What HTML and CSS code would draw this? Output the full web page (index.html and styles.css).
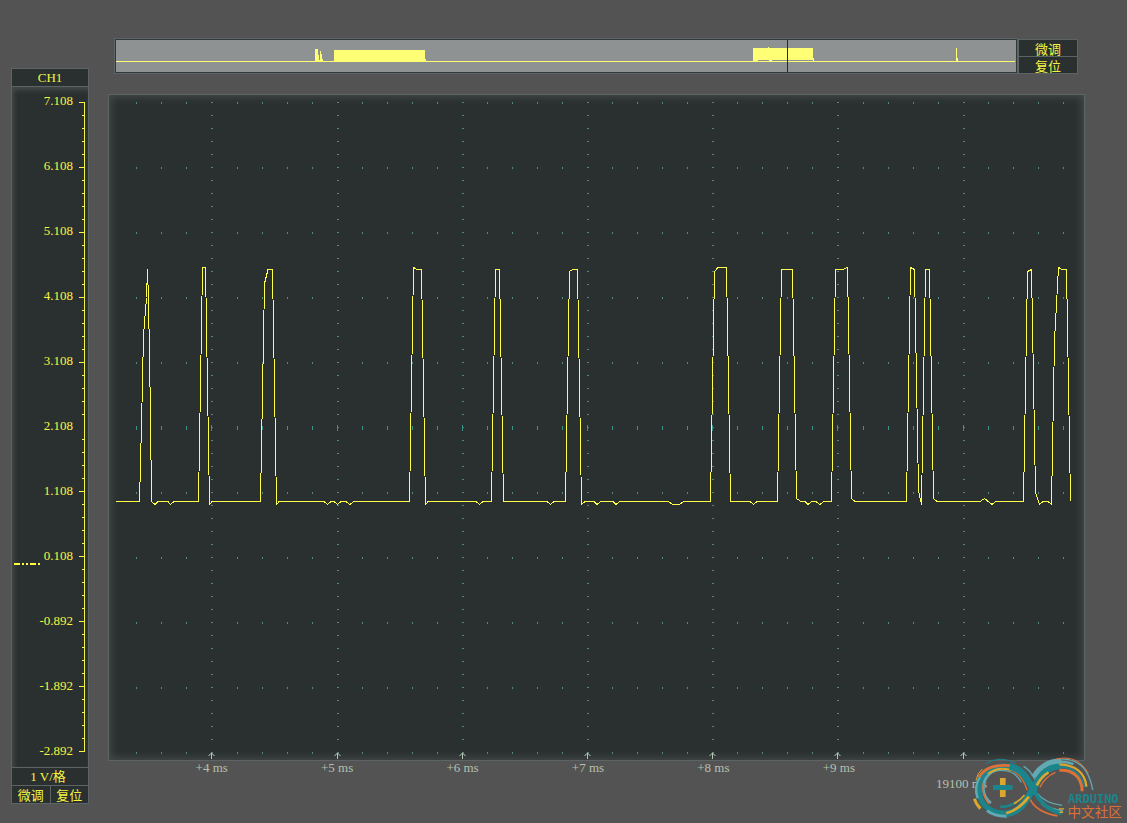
FILE: index.html
```html
<!DOCTYPE html>
<html lang="zh-CN">
<head>
<meta charset="utf-8">
<meta name="viewport" content="width=device-width, initial-scale=1">
<title>CH1</title>
<link rel="stylesheet" href="styles.css">
</head>
<body>
<main class="app">
  <aside class="channel">
    <h1 class="channel-name">CH1</h1>
    <div class="scale">
      <ol class="scale-labels">
        <li>7.108</li><li>6.108</li><li>5.108</li><li>4.108</li><li>3.108</li><li>2.108</li><li>1.108</li><li>0.108</li><li>-0.892</li><li>-1.892</li><li>-2.892</li>
      </ol>
      <svg class="scale-ticks" viewBox="0 0 6 651" preserveAspectRatio="none" aria-hidden="true">
        <path d="M5.500 0V651" stroke-width="1"/>
        <path d="M4 0V651" stroke-width="3" stroke-dasharray="1 12"/>
        <path d="M3 0V651" stroke-width="6" stroke-dasharray="1 64"/>
      </svg>
      <svg class="zero-mark" viewBox="0 0 27 2" aria-hidden="true"><path d="M0 1H6M8 1H10M12 1H14M16 1H22M24 1H26" stroke-width="2"/></svg>
    </div>
    <div class="per-div">1 V/格</div>
    <div class="channel-actions">
      <button type="button">微调</button>
      <button type="button">复位</button>
    </div>
  </aside>

  <section class="display">
    <div class="overview-row">
      <svg class="overview" viewBox="116 40 900 32" preserveAspectRatio="none" shape-rendering="crispEdges" role="img" aria-label="Overview">
        <path class="wave-fill" d="M116 61H1015V62H116ZM315 61V49H318V52L319 58L320 61L320 51H321L322 56L323 61ZM334 61V50H425V56L426 61ZM753 61V48H768V47H769V48H813V55L814 61H813V60H772V62H769V60H758L757 62H753ZM956 61V48H957V55L958 61Z"/>
        <path class="cursor" d="M787 40H788V72H787Z"/>
      </svg>
      <div class="overview-actions">
        <button type="button">微调</button>
        <button type="button">复位</button>
      </div>
    </div>

    <div class="scope">
      <svg class="plot" viewBox="109 95 975 665" shape-rendering="crispEdges" role="img" aria-label="CH1">
        <defs>
          <path id="row" d="M136.500 0v2M161.500 0v2M186.500 0v2M237.500 0v2M262.500 0v2M287.500 0v2M312.500 0v2M362.500 0v2M387.500 0v2M412.500 0v2M437.500 0v2M487.500 0v2M512.500 0v2M537.500 0v2M562.500 0v2M612.500 0v2M637.500 0v2M662.500 0v2M687.500 0v2M737.500 0v2M762.500 0v2M787.500 0v2M812.500 0v2M863.500 0v2M888.500 0v2M913.500 0v2M938.500 0v2M988.500 0v2M1013.500 0v2M1038.500 0v2M1063.500 0v2"/>
        </defs>
        <g class="grid">
          <use href="#row" y="102"/><use href="#row" y="167"/><use href="#row" y="232"/><use href="#row" y="297"/><use href="#row" y="362"/>
          <use href="#row" y="492"/><use href="#row" y="557"/><use href="#row" y="622"/><use href="#row" y="687"/><use href="#row" y="752"/>
          <path class="columns" d="M212 102V753M338 102V753M463 102V753M588 102V753M713 102V753M838 102V753M964 102V753"/>
          <g class="middle">
            <use href="#row" y="426"/><use href="#row" y="428"/>
            <path d="M211.500 425v6M337.500 425v6M462.500 425v6M587.500 425v6M712.500 425v6M837.500 425v6M963.500 425v6"/>
          </g>
        </g>
        <path class="arrows" shape-rendering="auto" d="M211.500 759v-6m-3 3l3-3l3 3M337.500 759v-6m-3 3l3-3l3 3M462.500 759v-6m-3 3l3-3l3 3M587.500 759v-6m-3 3l3-3l3 3M712.500 759v-6m-3 3l3-3l3 3M837.500 759v-6m-3 3l3-3l3 3M963.500 759v-6m-3 3l3-3l3 3"/>
        <polyline class="trace" transform="translate(0 .5)" points="116,501 139.500,501 141,443 142,403 143.500,335 146.500,297 147.500,269 148.500,299 149.500,357 150.500,415 151.500,501 155,504 158,501 168,501 170.500,504 174,501 198.500,501 202.500,267 205.500,267 209.500,504 212,501 260.500,501 264.500,283 268,269 272.500,269 276.500,504 279,501 324,501 327.500,504 331,501 334,501 337.500,504 341,501 346,501 350,504 354,501 409.500,501 413.500,267 417,269 421.500,269 425.500,504 428,501 476,501 479.500,504 483,501 491.500,501 495.500,269 499.500,269 503.500,501 547,501 550.500,504 554,501 565.500,501 569.500,271 573,269 577.500,269 581.500,504 585,501 594,501 597,504 601,501 613,501 616,504 620,501 668,501 673,504 679,504 684,501 710.500,501 714.500,271 718,267 726.500,267 730.500,501 750,501 753.500,504 757,501 777.500,501 781.500,269 792.500,269 796.500,498 801,501 805,501 808,504 812,501 816,501 820,504 824,501 831.500,501 835.500,269 843,269 847.500,267 851.500,498 855,501 906.500,501 910.500,267 914.500,269 918.500,490 921.500,504 925.500,269 929.500,269 933.500,498 937,501 980,501 984.500,498 992,504 996,501 1023.500,501 1027.500,271 1031.500,269 1035.500,492 1039.500,504 1043,501 1048,501 1051.500,504 1054.500,340 1058.500,267 1062,269 1066.500,269 1070.500,501"/>
      </svg>
    </div>

    <div class="axis">
      <ol class="time-labels">
        <li>+4 ms</li><li>+5 ms</li><li>+6 ms</li><li>+7 ms</li><li>+8 ms</li><li>+9 ms</li>
      </ol>
      <p class="time-base">19100 ms</p>
    </div>
  </section>

  <svg class="logo" viewBox="155 45 466 195" role="img" aria-label="ARDUINO 中文社区">
    <g fill="none">
      <path class="teal" stroke-width="16" d="M272 80C222 72 180 101 177 146C174 195 214 222 260 220"/>
      <path class="sky" stroke-width="7" d="M172 175A76 76 0 0 1 180 108"/>
      <path class="sky" stroke-width="9" d="M200 212Q224 230 260 229"/>
      <path class="sky" stroke-width="8" d="M212 189A57 57 0 0 1 204 105Q216 93 232 90"/>
      <path class="sky" stroke-width="4" d="M232 92Q282 86 303 127"/>
      <path class="orange" stroke-width="9" d="M176 111Q201 70 271 77"/>
      <path class="orange" stroke-width="4" d="M189 127Q183 168 207 192M278 93Q306 105 321 151"/>
      <path class="yellow" stroke-width="6" d="M203 101Q235 77 278 91"/>
      <path class="yellow" stroke-width="3" d="M167 121Q171 98 186 87"/>
      <path class="yellow" stroke-width="9" d="M162 176Q168 193 180 206"/>
      <path class="teal" stroke-width="3" d="M196 71Q237 45 287 69"/>
      <path class="sky" stroke-width="4" d="M310 79Q332 91 344 119"/>
      <path class="sky" stroke-width="4" d="M351 160Q375 190 426 196"/>
      <path class="sky" stroke-width="9" d="M366 190Q389 211 428 214"/>
      <path class="orange" stroke-width="5" d="M330 178Q348 216 412 228"/>
      <path class="teal" stroke-width="20" d="M268 79C308 85 326 126 344 157"/>
      <path class="teal" stroke-width="12" d="M340 150C358 187 389 213 424 220"/>
      <path class="teal" stroke-width="20" d="M258 221C309 218 326 163 357 116C376 88 395 78 424 77"/>
      <path class="yellow" stroke-width="8" d="M258 220Q296 210 326 170"/>
      <path class="teal" stroke-width="8" d="M240 200Q267 202 288 186"/>
      <path class="yellow" stroke-width="5" d="M281 191Q300 181 313 165"/>
      <path class="sky" stroke-width="15" d="M340 111C359 79 385 62 424 63"/>
      <path class="sky" stroke-width="4" d="M424 57Q501 55 518 150"/>
      <path class="sky" stroke-width="7" d="M420 65Q440 65 460 72"/>
      <path class="orange" stroke-width="3" d="M408 57Q472 42 505 100"/>
      <path class="teal" stroke-width="7" d="M417 79C458 80 486 106 492 143"/>
      <path class="orange" stroke-width="9" d="M418 91C455 88 486 110 486 154"/>
      <path class="yellow" stroke-width="7" d="M418 73C466 75 495 99 499 140"/>
      <path class="yellow" stroke-width="8" d="M350 136Q362 111 385 97"/>
      <path class="orange" stroke-width="4" d="M359 142Q375 110 406 97"/>
      <path class="yellow" stroke-width="4" d="M416 207H432M418 217H429"/>
    </g>
    <path fill="#dca72e" d="M239 114H256V171H239Z"/>
    <path fill="#1c858c" d="M218 135H277V150H218Z"/>
    <text class="logo-name" x="444" y="190">ARDUINO</text>
    <text class="logo-sub" x="442" y="231">中文社区</text>
  </svg>
</main>
</body>
</html>
```
FILE: styles.css
```css
* {
  box-sizing: border-box;
}

body {
  margin: 0;
  background: #535353;
  color: #f5f542;
  font: 13px/16px "Liberation Serif", "Noto Sans CJK SC", serif;
}

.app {
  position: relative;
  display: flex;
  gap: 19px;
  min-height: 100vh;
  padding: 39px 42px 19px 11px;
}

h1,
p,
ol {
  margin: 0;
  padding: 0;
  list-style: none;
}

button {
  flex: 1;
  padding: 0;
  border: 0;
  background: #2a2f2f;
  color: inherit;
  font: 13px/15px "Noto Sans CJK SC", sans-serif;
  cursor: pointer;
}

.channel {
  display: flex;
  flex: 0 0 78px;
  flex-direction: column;
  gap: 1px;
  margin-top: 29px;
  padding: 1px;
  background: #5d6465;
}

.channel-name,
.per-div {
  background: #2a2f2f;
  font-size: 13px;
  font-weight: 400;
  line-height: 17px;
  text-align: center;
}

.per-div {
  padding-right: 4px;
}

.scale {
  position: relative;
  display: flex;
  flex: 1;
  justify-content: flex-end;
  padding: 6px 3px 8px 0;
  background: #2a2f2f;
  box-shadow: inset 2px 3px 5px #454a4b;
}

.scale-labels {
  display: flex;
  flex-direction: column;
  justify-content: space-between;
  margin-right: 12px;
  text-align: right;
}

.scale-ticks {
  position: absolute;
  top: 15px;
  right: 3px;
  width: 6px;
  height: calc(100% - 30px);
  fill: none;
  stroke: #f5f542;
  shape-rendering: crispEdges;
}

.zero-mark {
  position: absolute;
  top: 70%;
  left: 2px;
  width: 27px;
  height: 2px;
  stroke: #ffff42;
}

.channel-actions {
  display: flex;
  gap: 1px;
  height: 17px;
}

.display {
  display: flex;
  flex: 1;
  flex-direction: column;
  min-width: 0;
}

.overview-row {
  display: flex;
  gap: 1px;
  height: 35px;
  margin: 0 7px 20px;
}

.overview {
  flex: 1;
  min-width: 0;
  height: 34px;
  border: 1px solid #33383a;
  background: #8f9292;
  box-shadow: 0 0 0 1px #5d6465;
}

.wave-fill {
  fill: #ffff76;
}

.cursor {
  fill: #26292b;
}

.overview-actions {
  display: flex;
  flex: 0 0 60px;
  flex-direction: column;
  gap: 1px;
  padding: 1px;
  background: #5d6465;
}

.scope {
  border: 1px solid #5d6465;
  background: #2a2f2f;
  box-shadow: inset 0 0 9px 2px #454a4b;
}

.plot {
  display: block;
  width: 100%;
  fill: none;
}

.grid {
  stroke: #52887f;
}

.columns {
  stroke-width: 2;
  stroke-dasharray: 1 12;
}

.middle {
  stroke: #389585;
}

.arrows {
  stroke: #b9c8b9;
}

.trace {
  stroke: #ffff4a;
}

.axis {
  flex: 1;
  margin-top: -1px;
  color: #b5c0ae;
}

.time-labels {
  display: flex;
  padding-left: 41px;
}

.time-labels li {
  flex: 0 0 13.400%;
  text-align: center;
}

.time-base {
  padding-right: 98px;
  text-align: right;
}

.logo {
  position: absolute;
  right: 0;
  bottom: 3px;
  width: 155px;
  height: 65px;
}

.teal {
  stroke: #1c858c;
}

.sky {
  stroke: #62a9b2;
}

.orange {
  stroke: #df7038;
}

.yellow {
  stroke: #dca72e;
}

.logo-name {
  fill: #1c858c;
  font: bold 36px "DejaVu Sans Mono", monospace;
}

.logo-sub {
  fill: #df7038;
  font: 41px "Noto Sans CJK SC", sans-serif;
}
```
